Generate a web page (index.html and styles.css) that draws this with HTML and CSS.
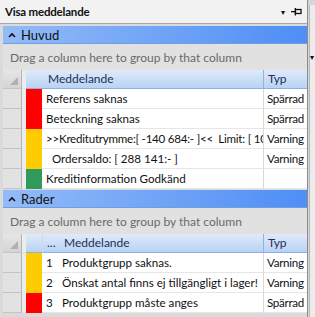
FILE: index.html
```html
<!DOCTYPE html>
<html lang="sv">
  <head>
    <meta charset="UTF-8" />
    <title>Visa meddelande</title>
    <link rel="stylesheet" href="styles.css">
  </head>
  <body>
    <div class="window">
      <div class="panel">
        <div class="titlebar">
          <span class="title">Visa meddelande</span>
          <span class="tools">
            <span class="drop">&#9662;</span>
            <svg class="pin" width="11" height="8" viewBox="0 0 11 8">
              <rect x="4.5" y="1.5" width="5.5" height="4" fill="none" stroke="#111" stroke-width="1.3"/>
              <rect x="0" y="3" width="4" height="1.3" fill="#111"/>
              <rect x="3.7" y="0" width="1.3" height="7.5" fill="#111"/>
            </svg>
          </span>
        </div>

        <div class="content">
          <!-- Huvud -->
          <div class="section">
            <svg class="chev" width="8" height="6" viewBox="0 0 8 6"><path d="M1 5 L4 2 L7 5" fill="none" stroke="#111" stroke-width="1.6"/></svg>
            Huvud
          </div>
          <div class="groupby">Drag a column here to group by that column</div>
          <div class="grid">
            <div class="row head">
              <div class="ind"><span class="corner"></span></div>
              <div class="gap"></div>
              <div class="cell color"></div>
              <div class="cell msg">Meddelande</div>
              <div class="cell typ">Typ</div>
            </div>
            <div class="row">
              <div class="ind"></div><div class="gap"></div>
              <div class="cell color red"></div>
              <div class="cell msg">Referens saknas</div>
              <div class="cell typ">Spärrad</div>
            </div>
            <div class="row">
              <div class="ind"></div><div class="gap"></div>
              <div class="cell color red"></div>
              <div class="cell msg">Beteckning saknas</div>
              <div class="cell typ">Spärrad</div>
            </div>
            <div class="row">
              <div class="ind"></div><div class="gap"></div>
              <div class="cell color yellow"></div>
              <div class="cell msg long">&gt;&gt;Kreditutrymme:[ -140 684:- ]&lt;&lt;  Limit: [ 10</div>
              <div class="cell typ">Varning</div>
            </div>
            <div class="row">
              <div class="ind"></div><div class="gap"></div>
              <div class="cell color yellow"></div>
              <div class="cell msg">  Ordersaldo: [ 288 141:- ]</div>
              <div class="cell typ">Varning</div>
            </div>
            <div class="row">
              <div class="ind"></div><div class="gap"></div>
              <div class="cell color green"></div>
              <div class="cell msg">Kreditinformation Godkänd</div>
              <div class="cell typ"></div>
            </div>
          </div>

          <!-- Rader -->
          <div class="section">
            <svg class="chev" width="8" height="6" viewBox="0 0 8 6"><path d="M1 5 L4 2 L7 5" fill="none" stroke="#111" stroke-width="1.6"/></svg>
            Rader
          </div>
          <div class="groupby">Drag a column here to group by that column</div>
          <div class="grid lines">
            <div class="row head">
              <div class="ind"><span class="corner"></span></div>
              <div class="gap"></div>
              <div class="cell color"></div>
              <div class="cell nr">...</div>
              <div class="cell msg">Meddelande</div>
              <div class="cell typ">Typ</div>
            </div>
            <div class="row">
              <div class="ind"></div><div class="gap"></div>
              <div class="cell color yellow"></div>
              <div class="cell nr">1</div>
              <div class="cell msg">Produktgrupp saknas.</div>
              <div class="cell typ">Varning</div>
            </div>
            <div class="row">
              <div class="ind"></div><div class="gap"></div>
              <div class="cell color yellow"></div>
              <div class="cell nr">2</div>
              <div class="cell msg">Önskat antal finns ej tillgängligt i lager!</div>
              <div class="cell typ">Varning</div>
            </div>
            <div class="row">
              <div class="ind"></div><div class="gap"></div>
              <div class="cell color red"></div>
              <div class="cell nr">3</div>
              <div class="cell msg">Produktgrupp måste anges</div>
              <div class="cell typ">Spärrad</div>
            </div>
          </div>
        </div>
      </div>
      <div class="edge"><span class="edge-arrow">&#9662;</span></div>
    </div>
  </body>
</html>
```

FILE: styles.css
```css
body {
  margin: 0;
  font-family: Lato, 'Noto Sans', sans-serif;
  font-size: 12px;
  color: #111;
  background: #d6d6d6;
}

.window {
  display: flex;
  width: 315px;
  height: 317px;
  overflow: hidden;
}

.panel {
  width: 307px;
  background: #dadada;
  border-right: 1px solid #8c8c8c;
  display: flex;
  flex-direction: column;
}

.titlebar {
  height: 23px;
  display: flex;
  align-items: center;
  justify-content: space-between;
  padding: 0 5px 0 5px;
  background: #f2f2f2;
  border-bottom: 1px solid #a8a8a8;
  margin-bottom: 2px;
}

.title {
  font-weight: bold;
  font-size: 11.5px;
  letter-spacing: -0.2px;
}

.tools {
  display: flex;
  align-items: center;
  gap: 6px;
}

.drop {
  font-size: 8px;
}

.content {
  padding-left: 3px;
  display: flex;
  flex-direction: column;
}

.section {
  height: 17px;
  display: flex;
  align-items: center;
  gap: 5px;
  padding-left: 5px;
  font-size: 13px;
  background: linear-gradient(to right, #93bbf7, #4f8ef6);
  border-bottom: 1px solid #6f9fe0;
}

.groupby {
  height: 26px;
  line-height: 27px;
  padding-left: 7px;
  color: #6a6a6a;
  font-size: 12px;
  background: #e1e1e1;
}

.grid {
  background: #fff;
  margin-bottom: 1px;
}

.row {
  display: grid;
  grid-template-columns: 19px 4px 16px 1fr 44px;
  height: 20px;
}

.grid.lines .row {
  grid-template-columns: 19px 4px 16px 16px 1fr 44px;
}

.row.head {
  height: 19px;
}

.ind {
  background: #e2e2e2;
  border-right: 1px solid #b4b4b4;
  border-bottom: 1px solid #c4c4c4;
  position: relative;
}

.gap {
  background: #ececec;
  border-bottom: 1px solid #e4e4e4;
}

.cell {
  border-bottom: 1px solid #e6e6e6;
  padding-left: 4px;
  line-height: 19px;
  font-size: 11.6px;
  white-space: pre;
  overflow: hidden;
}

.msg.long {
  letter-spacing: -0.25px;
}

.typ {
  border-left: 1px solid #d8d8d8;
  padding-left: 3px;
  letter-spacing: -0.3px;
}

.head .cell {
  background: linear-gradient(to bottom, #dfeafa, #b9d2f4);
  border-bottom: 1px solid #8fb0de;
  color: #1d2f55;
  line-height: 18px;
  font-size: 12px;
  padding-left: 6px;
}

.head .typ {
  border-left: 1px solid #94b2da;
  padding-left: 4px;
}

.head .nr {
  padding-left: 4px;
  border-left: 1px solid #c8d9f2;
}

.head .color {
  padding: 0;
}

.head .ind {
  background: linear-gradient(to bottom, #e6e6e6, #d4d4d4);
}

.corner {
  position: absolute;
  right: 3px;
  bottom: 3px;
  width: 0;
  height: 0;
  border-left: 8px solid transparent;
  border-bottom: 8px solid #b0b0b0;
}

.color {
  padding: 0;
  border-bottom: 1px solid transparent;
}

.red {
  background: #fe0000;
}

.yellow {
  background: #fecc00;
}

.green {
  background: #2f9a5c;
}

.edge {
  flex: 1;
  background: #ececec;
  border-left: 1px solid #b8b8b8;
  margin-left: 1px;
  margin-top: 5px;
  position: relative;
}

.edge-arrow {
  position: absolute;
  left: 0;
  top: 47px;
  font-size: 8px;
}
```
